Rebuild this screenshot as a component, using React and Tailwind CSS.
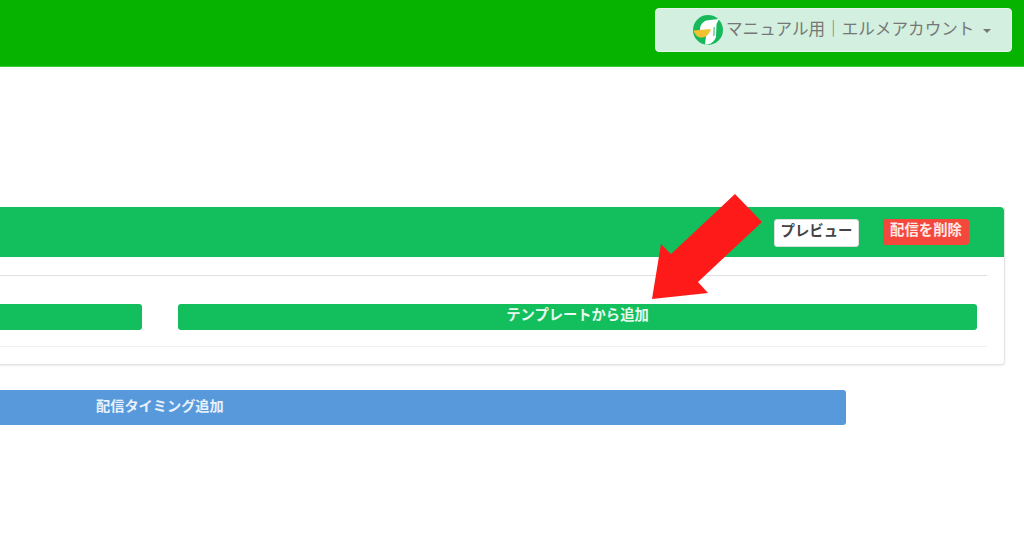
const font = { fontFamily: '"Noto Sans CJK JP", "Noto Sans", sans-serif' };

function Logo() {
  return (
    <svg width="30" height="30" viewBox="0 0 30 30" className="shrink-0">
      <circle cx="15" cy="15" r="15" fill="#17b95a" />
      <path d="M7 15 C7 8 12 5 17 5 L26 4 L23.5 9 L23 22 C21 27 17 30 12 29.5 L13 21 C9 20 7 18 7 15Z" fill="#ffffff" />
      <path d="M20.5 12 L22 12 L21.5 21 L20 21Z" fill="#6fcf96" />
      <path d="M0.5 15.5 L18 14 C16 20 12.5 22.5 8 22.5 C5 22.5 2 20 0.5 15.5Z" fill="#f2c230" />
    </svg>
  );
}

export default function App() {
  return (
    <div className="relative w-[1024px] h-[538px] overflow-hidden bg-white" style={font}>
      <header className="h-[67px] bg-[#06b400] border-b border-[#3fc93a] flex justify-end pt-2 pr-3">
        <div className="w-[357px] h-11 rounded bg-[#d2efdf] border border-[#e4f6ea] flex items-center pl-[37px] text-[16.6px] text-[#777777]">
          <Logo />
          <span className="ml-[3px] mb-[3px] whitespace-nowrap">マニュアル用｜エルメアカウント</span>
          <span className="ml-[9px] mt-[2px] w-0 h-0 border-x-[4px] border-x-transparent border-t-[4px] border-t-[#777777]" />
        </div>
      </header>

      <section className="mt-[140px] w-[1005px] h-[158px] bg-white border-r border-b border-[#e3e3e3] rounded-br shadow-[0_1px_2px_rgba(0,0,0,0.08)]">
        <div className="h-[50px] bg-[#12bf5c] rounded-tr flex items-start justify-end pt-3 pr-[35px] gap-6">
          <button className="w-[85px] h-7 bg-white border border-[#dddddd] rounded-[3px] text-[14.4px] font-bold text-[#444444] leading-none pb-[5px]">プレビュー</button>
          <button className="w-[86px] h-[26px] bg-[#f4483c] rounded-[3px] text-[14.4px] font-bold text-[#ffe9e6] leading-none pb-[6px]">配信を削除</button>
        </div>
        <div className="w-[987px] mt-[18px] border-t border-[#dfdfdf]" />
        <div className="flex gap-9 w-[977px] mt-7">
          <div className="w-[142px] h-[26px] bg-[#12bf5c] rounded-r-[3px]" />
          <button className="flex-1 h-[26px] bg-[#12bf5c] rounded-[3px] text-[14.3px] font-bold text-[#e8f9ee] leading-none pb-[5px]">テンプレートから追加</button>
        </div>
        <div className="w-[987px] mt-4 border-t border-[#f0f0f0]" />
      </section>

      <button className="block mt-[25px] w-[846px] h-[35px] bg-[#5899dc] rounded-r-[3px] text-left pl-[96px] pb-[4px] text-[14.2px] font-bold text-[#e8f1fb] leading-none">配信タイミング追加</button>

      <svg className="absolute left-0 top-0 pointer-events-none" width="1024" height="538">
        <polygon points="735,194 762,222 698,282 708,293 652,299 661,244 671,254" fill="#ff1a1a" />
      </svg>
    </div>
  );
}
